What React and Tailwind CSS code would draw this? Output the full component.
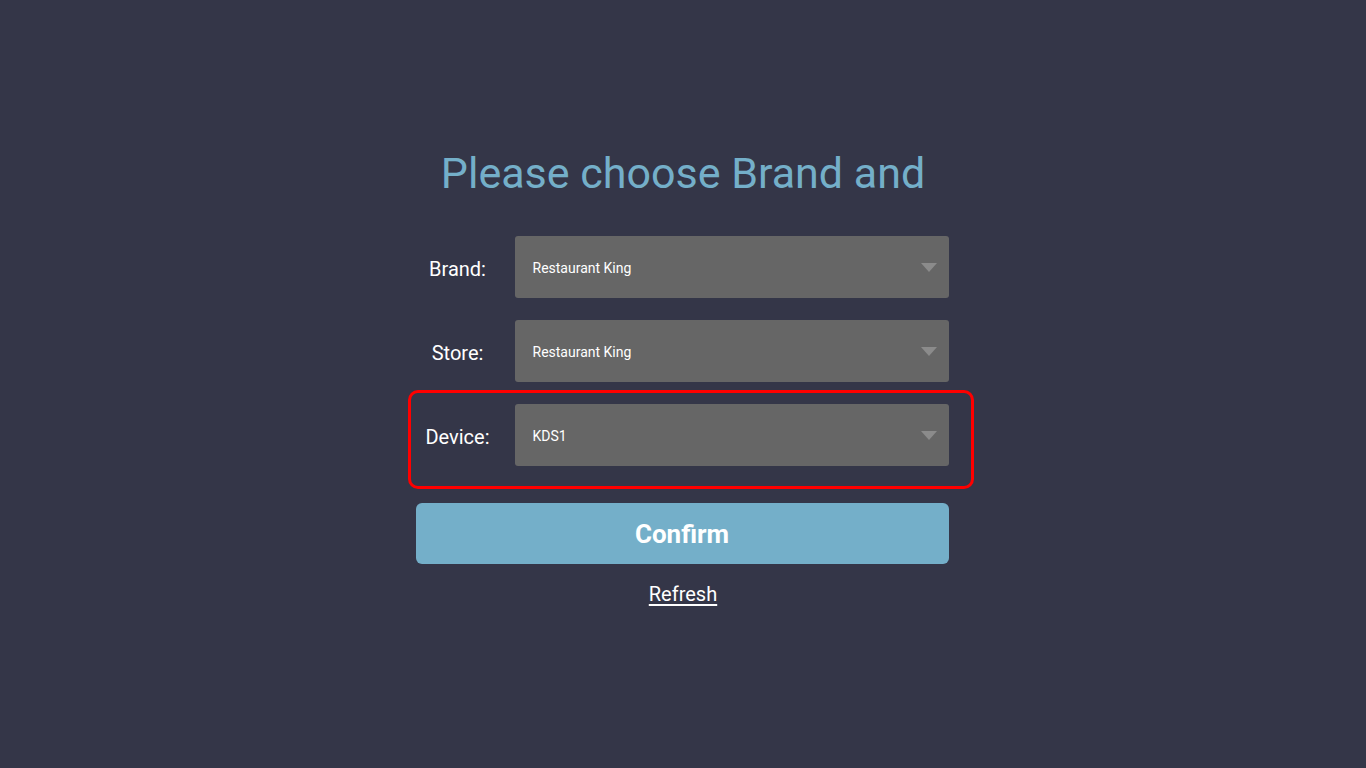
import React from 'react';

const Arrow = () => (
    <svg width="16" height="9" viewBox="0 0 16 9" className="shrink-0">
        <path d="M0 0 H16 L8 9 Z" fill="#8b8b8b" />
    </svg>
);

const SelectRow = ({ label, value, highlight }) => (
    <div className="relative flex items-center h-[62px]">
        {highlight && (
            <div className="absolute -top-[14px] -left-[8px] -right-[25px] -bottom-[23px] border-[3px] border-[#ff0000] rounded-[10px] pointer-events-none" />
        )}
        <div className="w-[84px] pt-[3px] text-center text-white text-[20px]">{label}</div>
        <div className="ml-[15px] flex-1 h-full bg-[#666666] rounded-[3px] flex items-center justify-between pl-[18px] pr-[12px]">
            <span className="pt-[3px] text-white text-[14px]">{value}</span>
            <Arrow />
        </div>
    </div>
);

export default function App() {
    return (
        <div className="min-h-screen bg-[#343648] flex flex-col items-center pt-[147px] font-['Roboto',sans-serif]">
            <h1 className="text-[43px] leading-[52px] text-[#74afc9]">Please choose Brand and</h1>
            <div className="w-[533px] -ml-[2px] mt-[37px] flex flex-col gap-[22px]">
                <SelectRow label="Brand:" value="Restaurant King" />
                <SelectRow label="Store:" value="Restaurant King" />
                <SelectRow label="Device:" value="KDS1" highlight />
            </div>
            <button className="mt-[37px] -ml-[2px] w-[533px] h-[61px] bg-[#74afc9] rounded-[6px] text-white text-[26px] font-bold pt-[2px]">
                Confirm
            </button>
            <button className="mt-[15px] text-white text-[20px] underline underline-offset-[3px]">Refresh</button>
        </div>
    );
}
